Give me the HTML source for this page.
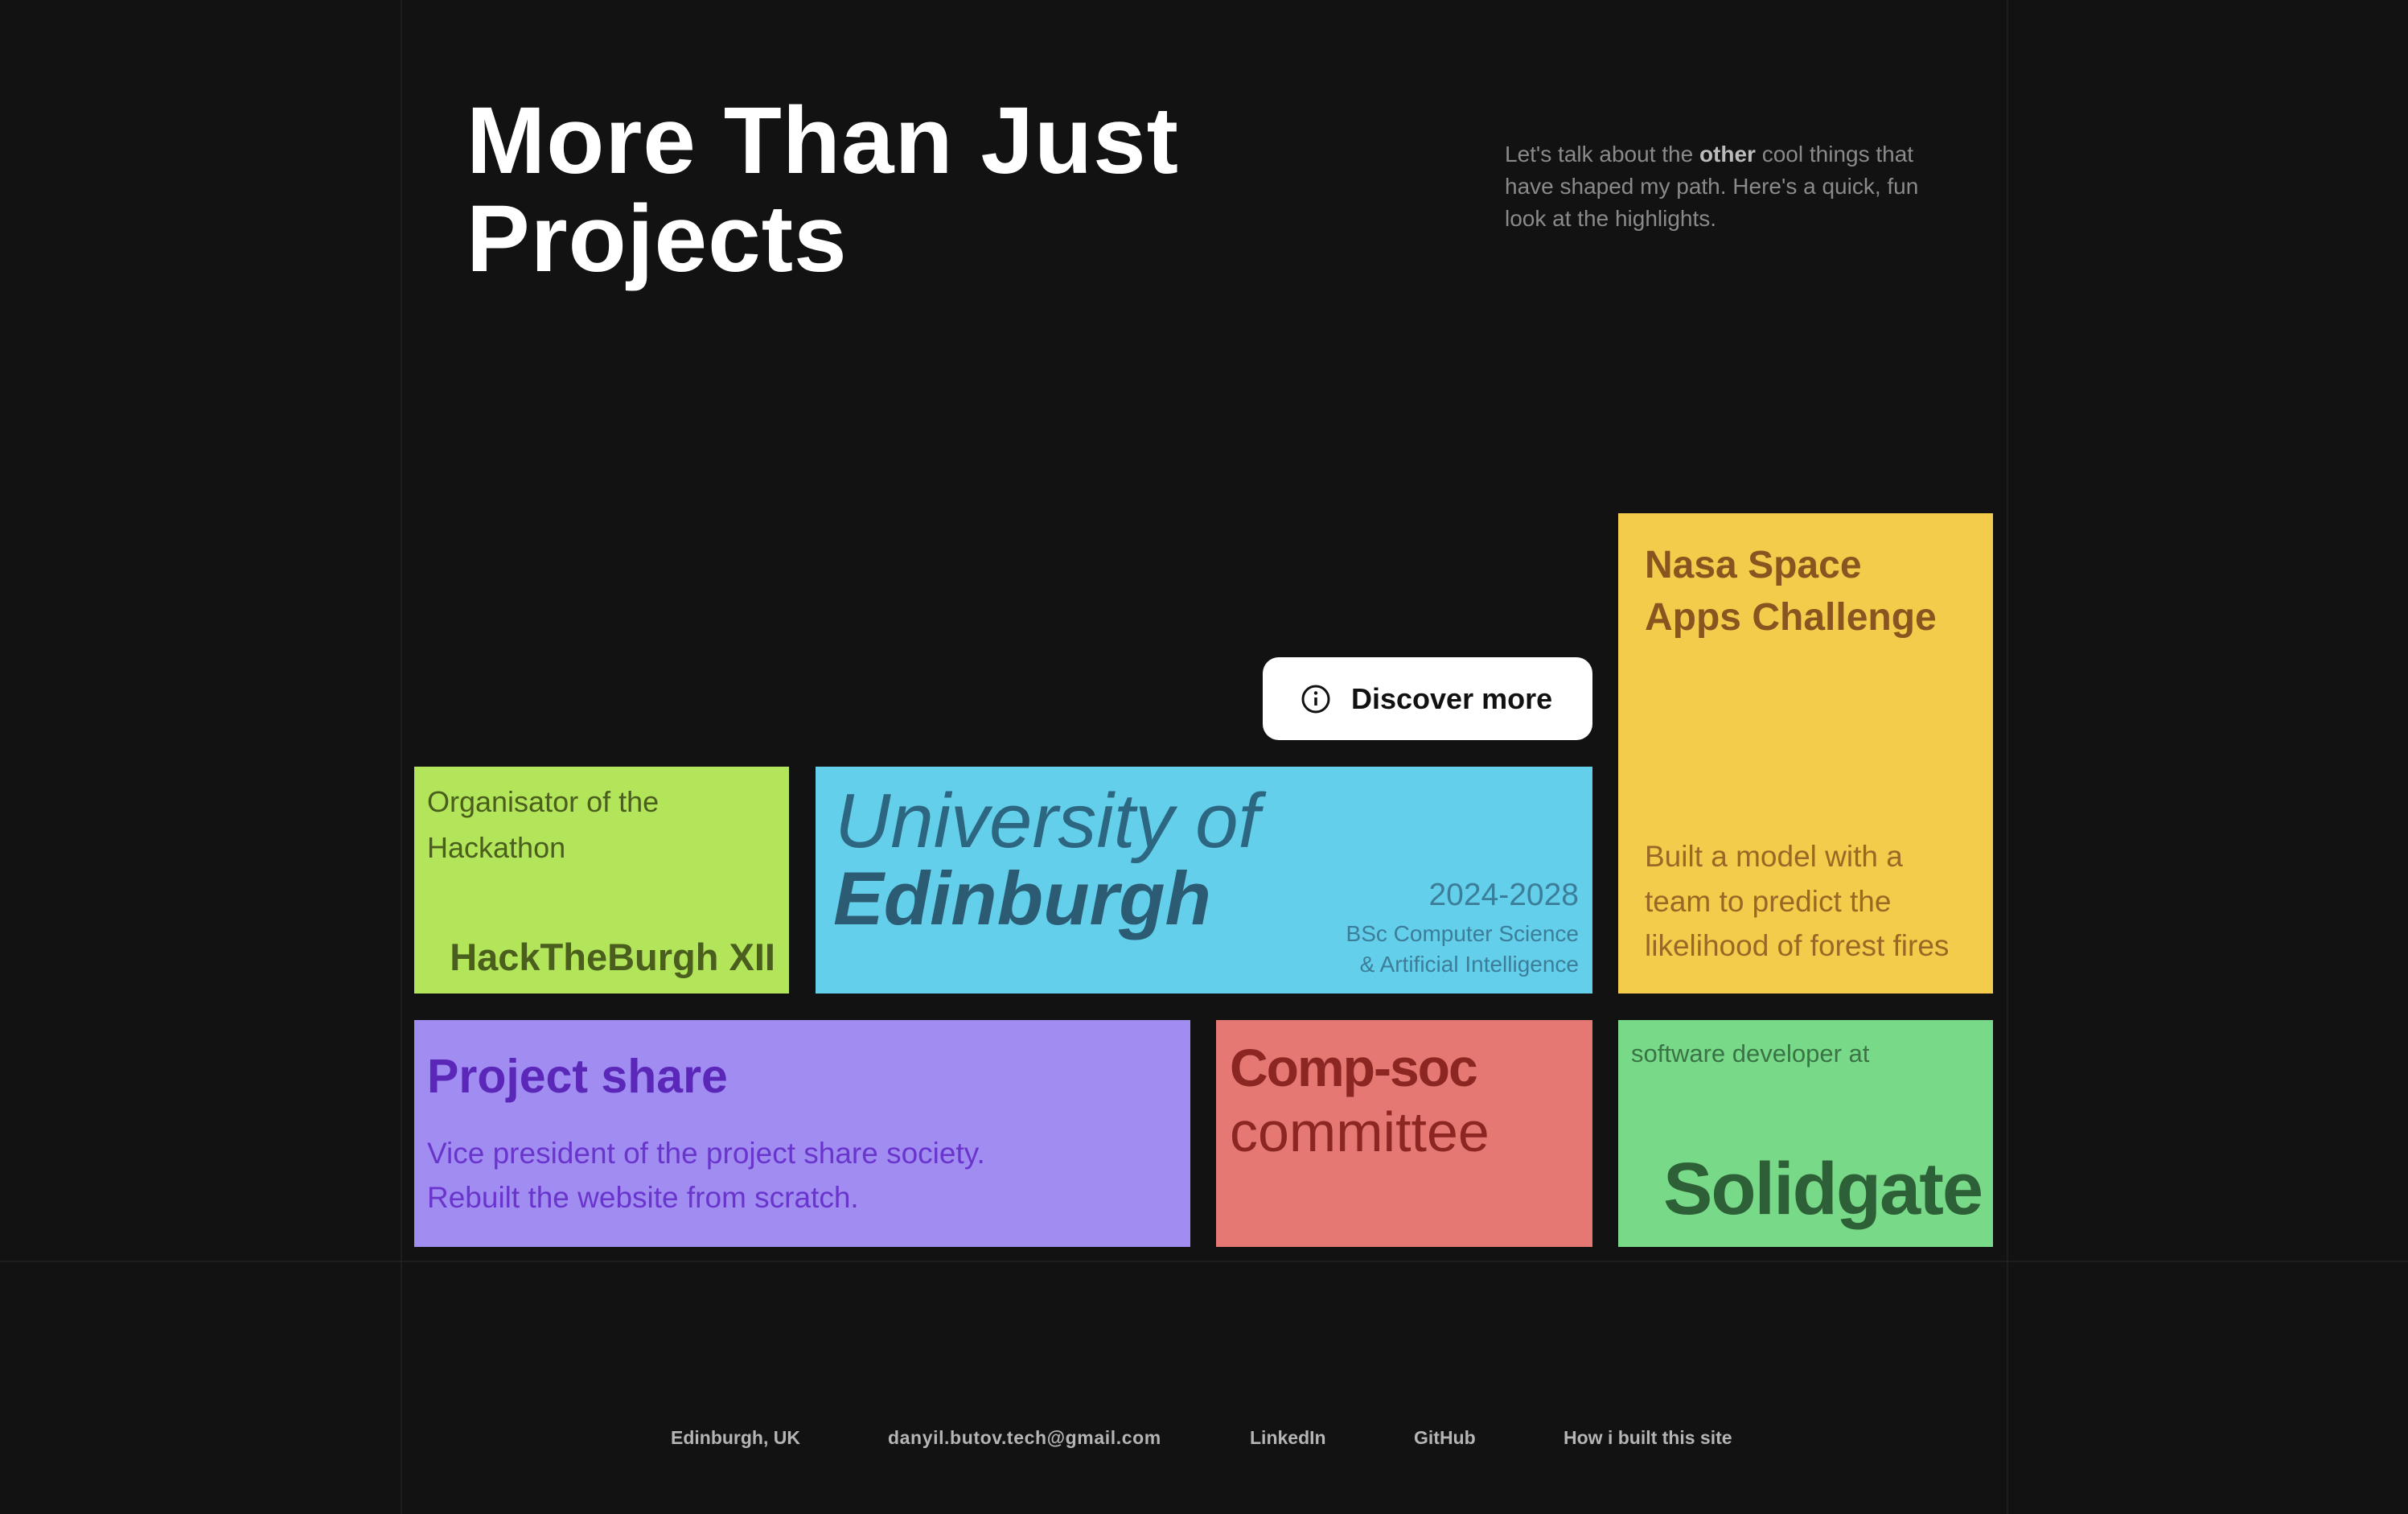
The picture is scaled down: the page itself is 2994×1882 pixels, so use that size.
<!DOCTYPE html>
<html><head><meta charset="utf-8"><style>
*{margin:0;padding:0;box-sizing:border-box}
body{width:2994px;height:1882px;background:#121212;position:relative;overflow:hidden;font-family:"Liberation Sans",sans-serif}
.a{position:absolute;white-space:nowrap}
.c{position:absolute}
.l{line-height:60px;height:60px}
</style></head><body>
<div class="c" style="left:498px;top:0;width:2px;height:1882px;background:#1e1e1e"></div>
<div class="c" style="left:2495px;top:0;width:2px;height:1882px;background:#1e1e1e"></div>
<div class="c" style="left:0;top:1567px;width:2994px;height:2px;background:#1e1e1e"></div>

<div class="a" style="left:580px;top:114px;font-size:118px;line-height:122px;font-weight:bold;color:#fff;letter-spacing:1px">More Than Just<br>Projects</div>
<div class="a" style="left:1871px;top:172px;font-size:28px;line-height:40px;color:#8a8a8a">Let's talk about the <b style="color:#bbb">other</b> cool things that<br>have shaped my path. Here's a quick, fun<br>look at the highlights.</div>

<div class="c" style="left:1570px;top:817px;width:410px;height:103px;background:#fff;border-radius:20px"></div>
<svg class="c" style="left:1617px;top:850px" width="38" height="38" viewBox="0 0 38 38"><circle cx="19" cy="19" r="16" fill="none" stroke="#111" stroke-width="3"/><line x1="19" y1="17" x2="19" y2="27" stroke="#111" stroke-width="3.5"/><circle cx="19" cy="11.5" r="2.2" fill="#111"/></svg>
<div class="a l" style="left:1680px;top:839px;font-size:36px;font-weight:bold;color:#111">Discover more</div>

<div class="c" style="left:515px;top:953px;width:466px;height:282px;background:#b3e55a"></div>
<div class="a l" style="left:531px;top:967px;font-size:36px;color:#4a5e1e">Organisator of the</div>
<div class="a l" style="left:531px;top:1024px;font-size:36px;color:#4a5e1e">Hackathon</div>
<div class="a l" style="right:2030px;top:1160px;font-size:47px;font-weight:bold;color:#4a5e1e">HackTheBurgh XII</div>

<div class="c" style="left:1014px;top:953px;width:966px;height:282px;background:#63cfea"></div>
<div class="a" style="left:1038px;top:966px;font-size:96px;line-height:110px;font-style:italic;font-weight:300;color:#2d6680">University of</div>
<div class="a" style="left:1036px;top:1062px;font-size:94px;line-height:110px;font-style:italic;font-weight:bold;color:#2c5c73">Edinburgh</div>
<div class="a l" style="right:1031px;top:1083px;font-size:39px;color:#3c7e99">2024-2028</div>
<div class="a l" style="right:1031px;top:1131px;font-size:28px;color:#3c7e99">BSc Computer Science</div>
<div class="a l" style="right:1031px;top:1169px;font-size:28px;color:#3c7e99">&amp; Artificial Intelligence</div>

<div class="c" style="left:2012px;top:638px;width:466px;height:597px;background:#f2cc4a"></div>
<div class="a l" style="left:2045px;top:673px;font-size:48px;font-weight:bold;color:#8a5420">Nasa Space</div>
<div class="a l" style="left:2045px;top:738px;font-size:48px;font-weight:bold;color:#8a5420">Apps Challenge</div>
<div class="a l" style="left:2045px;top:1035px;font-size:37px;color:#9a6826">Built a model with a</div>
<div class="a l" style="left:2045px;top:1091px;font-size:37px;color:#9a6826">team to predict the</div>
<div class="a l" style="left:2045px;top:1146px;font-size:37px;color:#9a6826">likelihood of forest fires</div>

<div class="c" style="left:515px;top:1268px;width:965px;height:282px;background:#a18cf2"></div>
<div class="a l" style="left:531px;top:1308px;font-size:59px;font-weight:bold;color:#5b27b8">Project share</div>
<div class="a l" style="left:531px;top:1404px;font-size:37px;color:#6a35cc">Vice president of the project share society.</div>
<div class="a l" style="left:531px;top:1459px;font-size:37px;color:#6a35cc">Rebuilt the website from scratch.</div>

<div class="c" style="left:1512px;top:1268px;width:468px;height:282px;background:#e57873"></div>
<div class="a" style="left:1529px;top:1287px;font-size:66px;line-height:80px;font-weight:bold;color:#8b2622;letter-spacing:-2px">Comp-soc</div>
<div class="a" style="left:1529px;top:1367px;font-size:70px;line-height:80px;font-weight:300;color:#8b2622">committee</div>

<div class="c" style="left:2012px;top:1268px;width:466px;height:282px;background:#78da88"></div>
<div class="a l" style="left:2028px;top:1280px;font-size:31px;color:#3a7446">software developer at</div>
<div class="a" style="right:530px;top:1428px;font-size:92px;line-height:100px;font-weight:bold;color:#2e6037;letter-spacing:-2px">Solidgate</div>

<div class="a l" style="left:834px;top:1757px;font-size:23px;font-weight:bold;color:#b5b5b5">Edinburgh, UK</div>
<div class="a l" style="left:1104px;top:1757px;font-size:23px;font-weight:bold;color:#b5b5b5;letter-spacing:0.6px">danyil.butov.tech@gmail.com</div>
<div class="a l" style="left:1554px;top:1757px;font-size:23px;font-weight:bold;color:#b5b5b5">LinkedIn</div>
<div class="a l" style="left:1758px;top:1757px;font-size:23px;font-weight:bold;color:#b5b5b5">GitHub</div>
<div class="a l" style="left:1944px;top:1757px;font-size:23px;font-weight:bold;color:#b5b5b5">How i built this site</div>
</body></html>
